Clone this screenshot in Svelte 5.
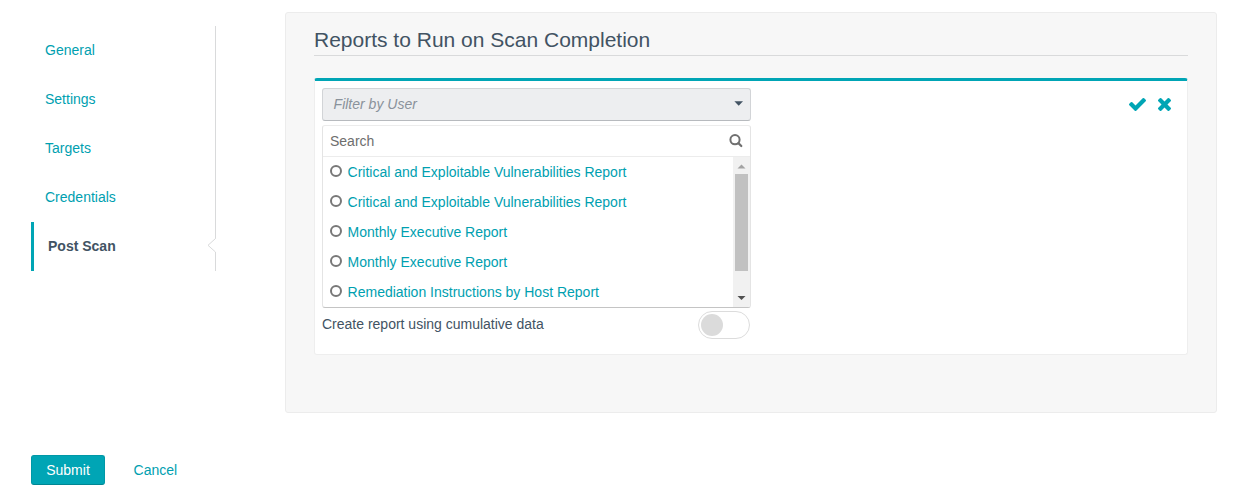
<script>
  const sections = ['General', 'Settings', 'Targets', 'Credentials', 'Post Scan'];
  const reports = [
    'Critical and Exploitable Vulnerabilities Report',
    'Critical and Exploitable Vulnerabilities Report',
    'Monthly Executive Report',
    'Monthly Executive Report',
    'Remediation Instructions by Host Report'
  ];
  let active = $state('Post Scan');
</script>

<div class="page">
  <div class="main">
    <nav>
      {#each sections as section}
        <button class="tab" class:active={section === active} onclick={() => (active = section)}>
          {section}
          {#if section === active}
            <svg class="notch" width="9" height="17" viewBox="0 0 9 17"><rect x="7" y="1.5" width="2" height="13.5" fill="#fff" /><path d="M8.5 0.5V1.5L1 8.3L8.5 15V16.5" fill="none" stroke="#d9dadb" /></svg>
          {/if}
        </button>
      {/each}
    </nav>

    <section class="panel">
      <h2>Reports to Run on Scan Completion</h2>
      <div class="card">
        <div class="fields">
          <div class="select">
            <span>Filter by User</span>
            <svg width="9" height="5" viewBox="0 0 9 5"><path d="M0.4 0.2H9L4.7 4.8Z" fill="#425363" /></svg>
          </div>
          <div class="dropdown">
            <div class="search">
              <span>Search</span>
              <svg width="14" height="14" viewBox="0 0 14 14" fill="none" stroke="#707070"><circle cx="6" cy="5.7" r="4.6" stroke-width="2" /><path d="M9.4 9.1L12.3 12" stroke-width="2.2" stroke-linecap="round" /></svg>
            </div>
            <div class="list">
              <ul>
                {#each reports as report}
                  <li><i class="circle"></i><span>{report}</span></li>
                {/each}
              </ul>
              <div class="scrollbar">
                <svg width="17" height="17" viewBox="0 0 17 17"><path d="M4.5 11.5L8.5 7.5L12.5 11.5Z" fill="#a3a3a3" /></svg>
                <div class="thumb"></div>
                <svg width="17" height="17" viewBox="0 0 17 17"><path d="M4.5 6L8.5 10L12.5 6Z" fill="#505050" /></svg>
              </div>
            </div>
          </div>
          <div class="option">
            <span>Create report using cumulative data</span>
            <div class="toggle"><div class="knob"></div></div>
          </div>
        </div>
        <div class="actions">
          <svg width="17" height="13" viewBox="121 334 1550 1188"><path fill="#00a5b5" d="M1671 566q0 40-28 68l-724 724-136 136q-28 28-68 28t-68-28l-136-136-362-362q-28-28-28-68t28-68l136-136q28-28 68-28t68 28l294 295 656-657q28-28 68-28t68 28l136 136q28 28 28 68z" /></svg>
          <svg width="13" height="13" viewBox="302 366 1188 1188"><path fill="#00a5b5" d="M1490 1322q0 40-28 68l-136 136q-28 28-68 28t-68-28l-294-294-294 294q-28 28-68 28t-68-28l-136-136q-28-28-28-68t28-68l294-294-294-294q-28-28-28-68t28-68l136-136q28-28 68-28t68 28l294 294 294-294q28-28 68-28t68 28l136 136q28 28 28 68t-28 68l-294 294 294 294q28 28 28 68z" /></svg>
        </div>
      </div>
    </section>
  </div>

  <div class="footer">
    <button class="submit">Submit</button>
    <button class="cancel">Cancel</button>
  </div>
</div>

<style>
  :global(body) { background: #fff; }
  .page {
    box-sizing: border-box;
    width: 1237px;
    height: 501px;
    padding: 12px 20px 0 31px;
    overflow: hidden;
    font: 14px/20px 'Liberation Sans', Arial, sans-serif;
    color: #425363;
  }
  .page * { box-sizing: border-box; }
  button { font: inherit; border: 0; background: none; margin: 0; cursor: pointer; }
  svg { display: block; flex: none; }
  .main { display: flex; align-items: flex-start; gap: 69px; }
  nav {
    width: 185px;
    margin-top: 14px;
    border-right: 1px solid #d9dadb;
    display: flex;
    flex-direction: column;
  }
  .tab {
    position: relative;
    height: 49px;
    padding: 0 14px 2px;
    text-align: left;
    color: #00a0b0;
  }
  .tab.active { border-left: 3px solid #00a5b5; font-weight: bold; color: #425363; }
  .notch { position: absolute; right: -1px; top: 15px; }
  .panel {
    width: 932px;
    height: 401px;
    padding: 13px 28px 0;
    background: #f7f7f7;
    border: 1px solid #ececec;
    border-radius: 3px;
  }
  h2 {
    margin: 0 0 22px;
    height: 30px;
    font-size: 21px;
    line-height: 28px;
    font-weight: normal;
    border-bottom: 1px solid #d9dadb;
  }
  .card {
    display: flex;
    justify-content: space-between;
    height: 277px;
    padding: 7px 16px 0 7px;
    background: #fff;
    border: 1px solid #eee;
    border-top: 3px solid #00a5b5;
    border-radius: 3px;
  }
  .fields { width: 429px; }
  .select {
    display: flex;
    justify-content: space-between;
    align-items: center;
    height: 33px;
    padding: 0 7px 2px 10.6px;
    background: #edeef0;
    border: 1px solid #d2d4d7;
    border-bottom-color: #b7babe;
    border-radius: 3px;
    color: #8a929b;
    font-style: italic;
  }
  .dropdown {
    height: 183px;
    margin-top: 4px;
    border: 1px solid #e4e4e4;
    border-top-color: #ececec;
    border-bottom-color: #c4c4c4;
    border-radius: 3px;
    overflow: hidden;
  }
  .search {
    display: flex;
    align-items: center;
    justify-content: space-between;
    height: 31px;
    padding: 0 7px;
    border-bottom: 1px solid #ececec;
    color: #6e6e6e;
  }
  .list { display: flex; height: 150px; }
  ul { flex: 1; margin: 0; padding: 0; list-style: none; }
  li { display: flex; align-items: center; height: 30px; padding-left: 7px; color: #00a0b0; }
  .circle { width: 12px; height: 12px; margin: 0 5.6px 2px 0; border: 2px solid #787878; border-radius: 50%; }
  .scrollbar {
    display: flex;
    flex-direction: column;
    align-items: center;
    justify-content: space-between;
    width: 17px;
    background: #f1f1f1;
  }
  .thumb { width: 13px; height: 97px; margin-bottom: 19px; background: #c1c1c1; }
  .option { display: flex; justify-content: space-between; padding: 3px 1px 0 0; }
  .option span { line-height: 27px; }
  .toggle { width: 52px; height: 28px; padding: 2px; border: 1px solid #dcdcdc; border-radius: 14px; }
  .knob { width: 22px; height: 22px; border-radius: 50%; background: #dbdbdb; }
  .actions { display: flex; gap: 12px; padding-top: 10px; height: 24px; }
  .footer { display: flex; align-items: center; margin-top: 42px; }
  .submit {
    width: 74px;
    height: 30px;
    padding: 0;
    color: #fff;
    background: #00a5b5;
    border: 1px solid #0098a7;
    border-bottom-color: #008693;
    border-radius: 3px;
  }
  .cancel { padding: 0; margin-left: 28.6px; color: #00a0b0; }
</style>
